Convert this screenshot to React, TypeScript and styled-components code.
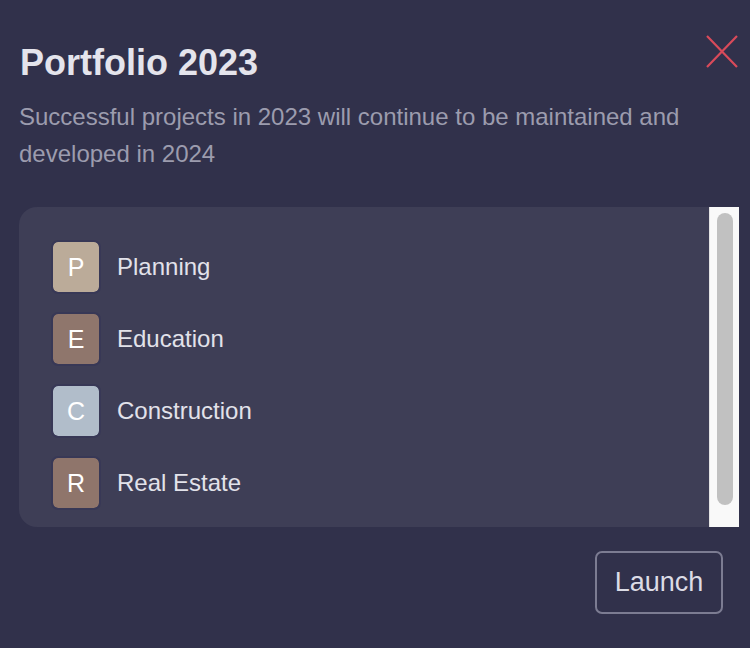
import React from 'react'
import styled, { createGlobalStyle } from 'styled-components'

const GlobalStyle = createGlobalStyle`
  html, body {
    margin: 0;
    padding: 0;
    background: #31314b;
  }
  body {
    font-family: "Liberation Sans", Arial, Helvetica, sans-serif;
  }
`

const Modal = styled.div`
  box-sizing: border-box;
  width: 750px;
  height: 648px;
  padding: 41px 11px 0 19px;
  background: #31314b;
  display: flex;
  flex-direction: column;
`

const Header = styled.div`
  display: flex;
  justify-content: space-between;
  align-items: flex-start;
`

const Title = styled.h1`
  margin: 0 0 0 1px;
  font-size: 36px;
  line-height: 44px;
  font-weight: 700;
  color: #e4e4ec;
`

const CloseButton = styled.button`
  display: flex;
  padding: 0;
  margin: -6px 1px 0 0;
  border: none;
  background: transparent;
  cursor: pointer;
`

const Description = styled.p`
  margin: 13px 40px 0 0;
  font-size: 24px;
  line-height: 37px;
  color: #9c9cae;
`

const ListPanel = styled.div`
  margin-top: 35px;
  height: 320px;
  display: flex;
  border-radius: 18px 0 0 18px;
  overflow: hidden;
`

const ScrollArea = styled.div`
  flex: 1;
  overflow: hidden;
  background: #3e3e56;
`

const ScrollTrack = styled.div`
  box-sizing: border-box;
  width: 30px;
  padding: 6px 6px 22px 7px;
  background: #f9f9f9;
  border-left: 1px solid #e4e4e4;
  display: flex;
`

const ScrollThumb = styled.div`
  flex: 1;
  background: #c1c1c1;
  border-radius: 8px;
`

const List = styled.ul`
  list-style: none;
  margin: 0;
  padding: 33px 32px 34px 32px;
  display: flex;
  flex-direction: column;
  gap: 18px;
`

const Item = styled.li`
  display: flex;
  align-items: center;
  gap: 16px;
`

const Avatar = styled.div<{ $bg: string }>`
  box-sizing: border-box;
  width: 50px;
  height: 54px;
  border: 2px solid #383856;
  border-radius: 7px;
  background: ${({ $bg }) => $bg};
  background-clip: padding-box;
  display: flex;
  align-items: center;
  justify-content: center;
  color: #ffffff;
  font-size: 25px;
`

const Label = styled.span`
  font-size: 24px;
  color: #e2e2ea;
`

const Footer = styled.div`
  display: flex;
  justify-content: flex-end;
  padding: 24px 16px 0 0;
`

const LaunchButton = styled.button`
  box-sizing: border-box;
  width: 128px;
  height: 63px;
  border: 2px solid #7c7c92;
  border-radius: 7px;
  background: transparent;
  color: #dcdce6;
  font-family: inherit;
  font-size: 27px;
  cursor: pointer;
`

const categories = [
  { name: 'Planning', color: '#bbab99' },
  { name: 'Education', color: '#8f766c' },
  { name: 'Construction', color: '#b1bdca' },
  { name: 'Real Estate', color: '#8f756b' },
]

export default function App() {
  return (
    <>
      <GlobalStyle />
      <Modal>
        <Header>
          <Title>Portfolio 2023</Title>
          <CloseButton aria-label="Close">
            <svg width="32" height="33" viewBox="0 0 32 33">
              <path d="M1 1 L31 32 M31 1 L1 32" stroke="#d94a5a" strokeWidth="2.2" fill="none" />
            </svg>
          </CloseButton>
        </Header>
        <Description>
          Successful projects in 2023 will continue to be maintained and developed in 2024
        </Description>
        <ListPanel>
          <ScrollArea>
            <List>
              {categories.map((c) => (
                <Item key={c.name}>
                  <Avatar $bg={c.color}>{c.name[0]}</Avatar>
                  <Label>{c.name}</Label>
                </Item>
              ))}
            </List>
          </ScrollArea>
          <ScrollTrack>
            <ScrollThumb />
          </ScrollTrack>
        </ListPanel>
        <Footer>
          <LaunchButton>Launch</LaunchButton>
        </Footer>
      </Modal>
    </>
  )
}
